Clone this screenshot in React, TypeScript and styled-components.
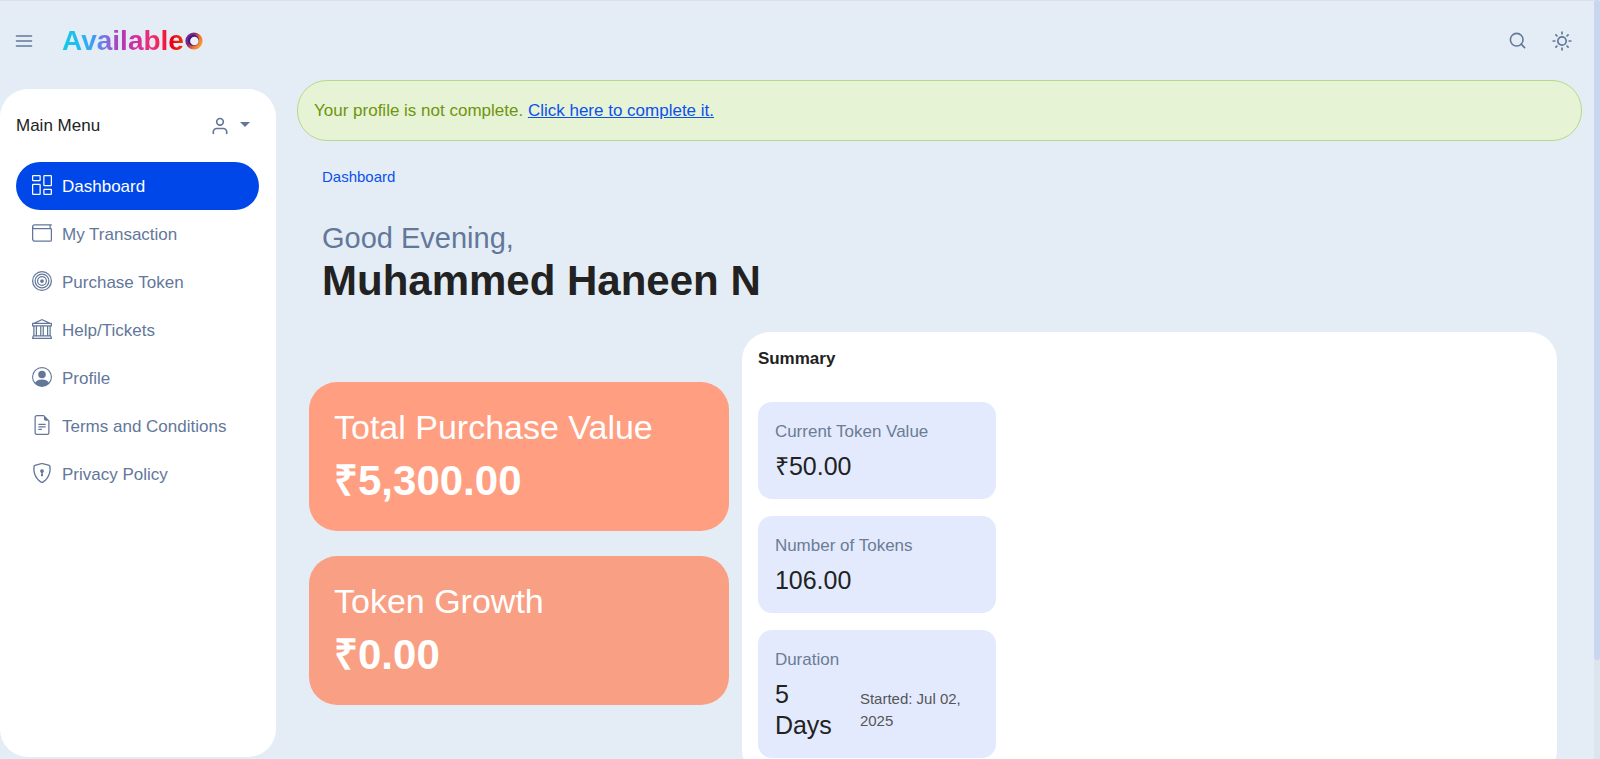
import React from 'react';
import styled, { createGlobalStyle, css } from 'styled-components';
import { FiMenu, FiSearch, FiSun, FiUser } from 'react-icons/fi';
import {
  BsBank, BsBullseye, BsColumnsGap, BsFileEarmarkText, BsPersonCircle, BsShieldLock, BsWallet,
} from 'react-icons/bs';

const GlobalStyle = createGlobalStyle`
  *, *::before, *::after { box-sizing: border-box; }
  body {
    margin: 0;
    background: #e4edf5;
    color: #222222;
    font: 17px/25px "Liberation Sans", Arial, sans-serif;
  }
  h1, h2, h3, p, ul { margin: 0; padding: 0; font-weight: 400; }
  button { font: inherit; border: 0; background: none; padding: 0; cursor: pointer; }
  a { color: #0c50ee; }
`;

const Page = styled.div`
  height: 100vh;
  overflow: hidden;
  border-top: 1px solid #dedfe3;
  padding-right: 6px;
`;

const Header = styled.header`
  display: flex;
  align-items: center;
  height: 79px;
  padding: 0 22px 0 14px;
`;

const IconButton = styled.button`
  display: flex;
  color: #63779a;
`;

const Brand = styled.a`
  display: flex;
  align-items: baseline;
  gap: 1px;
  margin-left: 28px;
  text-decoration: none;
  font-size: 28px;
  line-height: 32px;
  font-weight: 700;
`;

const BrandName = styled.span`
  color: transparent;
  background: linear-gradient(90deg, #14cbe2 0%, #22b8f4 16%, #4a94f6 28%, #8a68d8 38%, #b03ab8 48%, #d030a0 60%, #f02c70 74%, #f8204c 82%, #ea0018 90%, #f03a00 100%);
  background-clip: text;
  -webkit-background-clip: text;
`;

const HeaderTools = styled.div`
  display: flex;
  align-items: center;
  gap: 25px;
  margin-left: auto;
`;

const Body = styled.div`
  display: flex;
  align-items: flex-start;
`;

const Sidebar = styled.aside`
  flex: 0 0 276px;
  height: calc(100vh - 91px);
  margin-top: 9px;
  padding: 24px 17px 24px 16px;
  border-radius: 28px;
  background: #ffffff;
`;

const SidebarHead = styled.div`
  display: flex;
  align-items: center;
  justify-content: space-between;
  padding-right: 9px;
  margin-bottom: 24px;
`;

const ProfileButton = styled(IconButton)`
  align-items: center;
  gap: 10px;
`;

const Caret = styled.span`
  border: 5px solid transparent;
  border-top-color: currentColor;
  border-bottom: 0;
  margin-bottom: 3px;
`;

const MenuList = styled.ul`
  list-style: none;
`;

const MenuLink = styled.a<{ $active?: boolean }>`
  display: flex;
  align-items: center;
  gap: 10px;
  height: 48px;
  padding: 0 16px;
  border-radius: 24px;
  color: #63779a;
  text-decoration: none;
  svg { margin-bottom: 3px; }
  ${({ $active }) => $active && css`
    background: #0047e9;
    color: #ffffff;
  `}
`;

const Main = styled.main`
  flex: 1;
  min-width: 0;
  padding: 0 12px 0 21px;
`;

const Alert = styled.div`
  padding: 17px 16px;
  border: 1px solid #b9d78b;
  border-radius: 30px;
  background: #e6f3d5;
  color: #6f950f;
`;

const Intro = styled.section`
  padding: 23px 25px 0;
`;

const Crumb = styled.a`
  display: block;
  font-size: 15px;
  text-decoration: none;
`;

const Greeting = styled.p`
  margin-top: 31px;
  font-size: 29px;
  line-height: 36px;
  color: #63779a;
`;

const UserName = styled.h1`
  font-size: 42px;
  line-height: 50px;
  font-weight: 700;
`;

const Columns = styled.div`
  display: grid;
  grid-template-columns: 34fr 66fr;
  align-items: start;
  gap: 13px;
  padding: 26px 25px 0 12px;
`;

const Totals = styled.div`
  display: grid;
  gap: 25px;
  padding-top: 50px;
`;

const TotalCard = styled.section<{ $tone: string }>`
  display: grid;
  gap: 8px;
  padding: 24px 25px 25px;
  border-radius: 28px;
  background: ${({ $tone }) => $tone};
  color: #ffffff;
`;

const TotalTitle = styled.h2`
  font-size: 34px;
  line-height: 42px;
`;

const TotalValue = styled.p`
  font-size: 42px;
  line-height: 50px;
  font-weight: 700;
`;

const Summary = styled.section`
  padding: 14px 16px 20px;
  border-radius: 28px;
  background: #ffffff;
`;

const SummaryTitle = styled.h2`
  font-size: 17px;
  font-weight: 700;
`;

const Stats = styled.div`
  display: grid;
  gap: 17px;
  width: 238px;
  margin-top: 31px;
`;

const StatCard = styled.section`
  padding: 17px;
  border-radius: 14px;
  background: #e3eafe;
`;

const StatLabel = styled.h3`
  font-size: 17px;
  color: #6b7c95;
`;

const StatRow = styled.div`
  display: flex;
  align-items: center;
  gap: 28px;
  margin-top: 7px;
`;

const StatValue = styled.p<{ $narrow?: boolean }>`
  flex: 0 0 ${({ $narrow }) => ($narrow ? '57px' : 'auto')};
  font-size: 25px;
  line-height: 31px;
`;

const StatNote = styled.p`
  font-size: 15px;
  line-height: 22px;
  color: #555555;
`;

const ScrollTrack = styled.div`
  position: fixed;
  inset: 0 0 0 auto;
  width: 6px;
  background: #dde5ec;
`;

const ScrollThumb = styled.div`
  height: 87%;
  border-radius: 3px;
  background: #c8d6f0;
`;

const menu = [
  { label: 'Dashboard', Icon: BsColumnsGap },
  { label: 'My Transaction', Icon: BsWallet },
  { label: 'Purchase Token', Icon: BsBullseye },
  { label: 'Help/Tickets', Icon: BsBank },
  { label: 'Profile', Icon: BsPersonCircle },
  { label: 'Terms and Conditions', Icon: BsFileEarmarkText },
  { label: 'Privacy Policy', Icon: BsShieldLock },
];

const totals = [
  { title: 'Total Purchase Value', value: '₹5,300.00', tone: '#ff9e80' },
  { title: 'Token Growth', value: '₹0.00', tone: '#f99f83' },
];

const stats = [
  { label: 'Current Token Value', value: '₹50.00' },
  { label: 'Number of Tokens', value: '106.00' },
  { label: 'Duration', value: '5 Days', note: 'Started: Jul 02, 2025' },
];

function BrandRing() {
  return (
    <svg width="18" height="18" viewBox="0 0 18 18" aria-hidden="true">
      <defs>
        <linearGradient id="ring" x1="0.1" y1="0.2" x2="0.9" y2="0.7">
          <stop offset="0" stopColor="#6a1fa0" />
          <stop offset="0.35" stopColor="#8a2a70" />
          <stop offset="0.65" stopColor="#f06a28" />
          <stop offset="1" stopColor="#fa9a30" />
        </linearGradient>
      </defs>
      <circle cx="9" cy="9" r="8.6" fill="url(#ring)" />
      <circle cx="8.6" cy="8.4" r="5.4" fill="#3f1878" />
      <circle cx="9.4" cy="9" r="4.3" fill="#edf0f7" />
    </svg>
  );
}

export default function App() {
  return (
    <Page>
      <GlobalStyle />
      <Header>
        <IconButton aria-label="Toggle menu"><FiMenu size={20} /></IconButton>
        <Brand href="#" aria-label="Availableo">
          <BrandName>Available</BrandName>
          <BrandRing />
        </Brand>
        <HeaderTools>
          <IconButton aria-label="Search"><FiSearch size={19} /></IconButton>
          <IconButton aria-label="Switch theme">
            <svg width="20" height="20" viewBox="0 0 20 20" fill="none" stroke="currentColor" strokeWidth="1.7" strokeLinecap="round" aria-hidden="true">
              <circle cx="10" cy="10" r="4.2" />
              <path d="M10 1.2v1.6M10 17.2v1.6M1.2 10h1.6M17.2 10h1.6M3.9 3.9l1 1M15.1 15.1l1 1M3.9 16.1l1-1M15.1 4.9l1-1" />
            </svg>
          </IconButton>
        </HeaderTools>
      </Header>
      <Body>
        <Sidebar>
          <SidebarHead>
            <span>Main Menu</span>
            <ProfileButton aria-label="Account"><FiUser size={20} /><Caret /></ProfileButton>
          </SidebarHead>
          <nav>
            <MenuList>
              {menu.map(({ label, Icon }, i) => (
                <li key={label}>
                  <MenuLink href="#" $active={i === 0}><Icon size={20} />{label}</MenuLink>
                </li>
              ))}
            </MenuList>
          </nav>
        </Sidebar>
        <Main>
          <Alert role="alert">
            Your profile is not complete. <a href="#">Click here to complete it.</a>
          </Alert>
          <Intro>
            <Crumb href="#">Dashboard</Crumb>
            <Greeting>Good Evening,</Greeting>
            <UserName>Muhammed Haneen N</UserName>
          </Intro>
          <Columns>
            <Totals>
              {totals.map((t) => (
                <TotalCard key={t.title} $tone={t.tone}>
                  <TotalTitle>{t.title}</TotalTitle>
                  <TotalValue>{t.value}</TotalValue>
                </TotalCard>
              ))}
            </Totals>
            <Summary>
              <SummaryTitle>Summary</SummaryTitle>
              <Stats>
                {stats.map((s) => (
                  <StatCard key={s.label}>
                    <StatLabel>{s.label}</StatLabel>
                    <StatRow>
                      <StatValue $narrow={!!s.note}>{s.value}</StatValue>
                      {s.note && <StatNote>{s.note}</StatNote>}
                    </StatRow>
                  </StatCard>
                ))}
              </Stats>
            </Summary>
          </Columns>
        </Main>
      </Body>
      <ScrollTrack aria-hidden="true"><ScrollThumb /></ScrollTrack>
    </Page>
  );
}
